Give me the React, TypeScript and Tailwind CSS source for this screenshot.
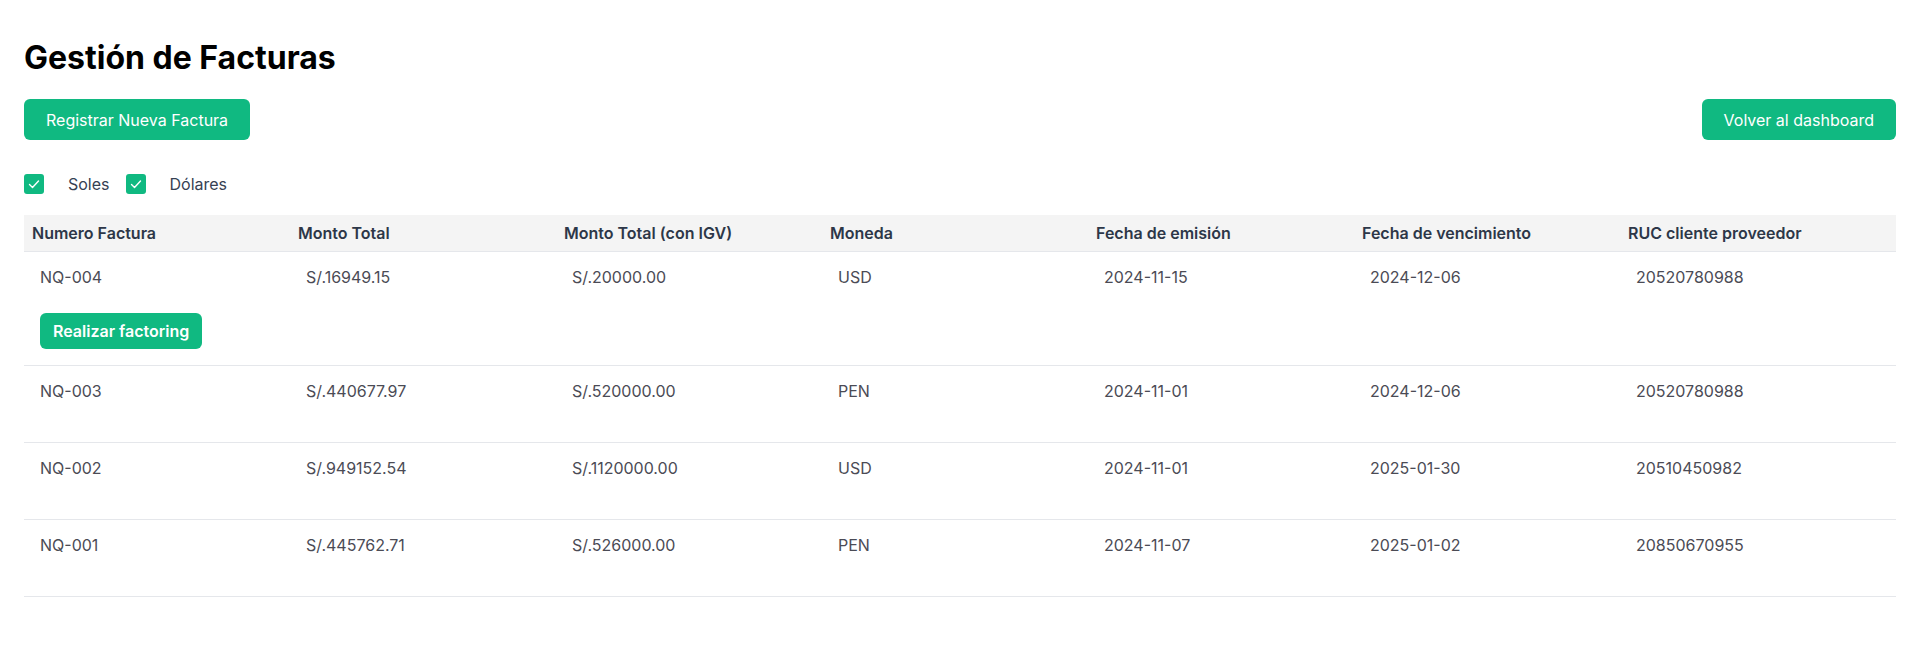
import React from 'react';

type Factura = {
  numero: string;
  monto: string;
  montoIgv: string;
  moneda: string;
  emision: string;
  vencimiento: string;
  ruc: string;
  factoring?: boolean;
};

const facturas: Factura[] = [
  { numero: 'NQ-004', monto: 'S/.16949.15', montoIgv: 'S/.20000.00', moneda: 'USD', emision: '2024-11-15', vencimiento: '2024-12-06', ruc: '20520780988', factoring: true },
  { numero: 'NQ-003', monto: 'S/.440677.97', montoIgv: 'S/.520000.00', moneda: 'PEN', emision: '2024-11-01', vencimiento: '2024-12-06', ruc: '20520780988' },
  { numero: 'NQ-002', monto: 'S/.949152.54', montoIgv: 'S/.1120000.00', moneda: 'USD', emision: '2024-11-01', vencimiento: '2025-01-30', ruc: '20510450982' },
  { numero: 'NQ-001', monto: 'S/.445762.71', montoIgv: 'S/.526000.00', moneda: 'PEN', emision: '2024-11-07', vencimiento: '2025-01-02', ruc: '20850670955' },
];

const columnas = [
  'Numero Factura',
  'Monto Total',
  'Monto Total (con IGV)',
  'Moneda',
  'Fecha de emisión',
  'Fecha de vencimiento',
  'RUC cliente proveedor',
];

function Check({ label }: { label: string }) {
  return (
    <label className="flex items-center">
      <span className="h-5 w-5 rounded-[3px] bg-[#10b981] flex items-center justify-center">
        <svg viewBox="0 0 16 16" className="h-4 w-4" fill="none" stroke="white" strokeWidth="1.4" strokeLinecap="round" strokeLinejoin="round">
          <path d="M3.5 8.5l3 3 6-6.5" />
        </svg>
      </span>
      <span className="ml-6 mr-4 text-base text-gray-700">{label}</span>
    </label>
  );
}

export default function App() {
  return (
    <div className="min-h-screen bg-white pl-6 pr-4 pt-[38px] font-['Inter',sans-serif]">
      <h1 className="text-[32px] leading-10 font-bold text-black">Gestión de Facturas</h1>

      <div className="flex items-center justify-between mt-[21px]">
        <button className="h-[41px] px-[22px] rounded-md bg-[#10b981] text-white text-base">
          Registrar Nueva Factura
        </button>
        <button className="h-[41px] px-[22px] rounded-md bg-[#10b981] text-white text-base">
          Volver al dashboard
        </button>
      </div>

      <div className="flex items-center mt-[32px]">
        <Check label="Soles" />
        <Check label="Dólares" />
      </div>

      <table className="w-full table-fixed mt-[19px] border-collapse">
        <colgroup>
          <col className="w-[266px]" />
          <col className="w-[266px]" />
          <col className="w-[266px]" />
          <col className="w-[266px]" />
          <col className="w-[266px]" />
          <col className="w-[266px]" />
          <col />
        </colgroup>
        <thead>
          <tr className="bg-[#f4f4f4] border-b border-gray-200">
            {columnas.map((c) => (
              <th key={c} className="px-2 py-2 text-left text-base leading-5 font-semibold text-[#2d3748]">
                {c}
              </th>
            ))}
          </tr>
        </thead>
        <tbody>
          {facturas.map((f) => {
            const celdas = [f.numero, f.monto, f.montoIgv, f.moneda, f.emision, f.vencimiento, f.ruc];
            return (
              <tr key={f.numero} className="border-b border-gray-200 align-top">
                {celdas.map((v, i) => (
                  <td
                    key={i}
                    className={`px-4 pt-[13px] text-base leading-6 text-[#4b4b55] ${f.factoring ? 'pb-4' : 'pb-[39px]'}`}
                  >
                    <div>{v}</div>
                    {f.factoring && i === 0 && (
                      <button className="mt-6 h-9 px-[13px] rounded-md bg-[#10b981] text-white text-base font-semibold whitespace-nowrap">
                        Realizar factoring
                      </button>
                    )}
                  </td>
                ))}
              </tr>
            );
          })}
        </tbody>
      </table>
    </div>
  );
}
